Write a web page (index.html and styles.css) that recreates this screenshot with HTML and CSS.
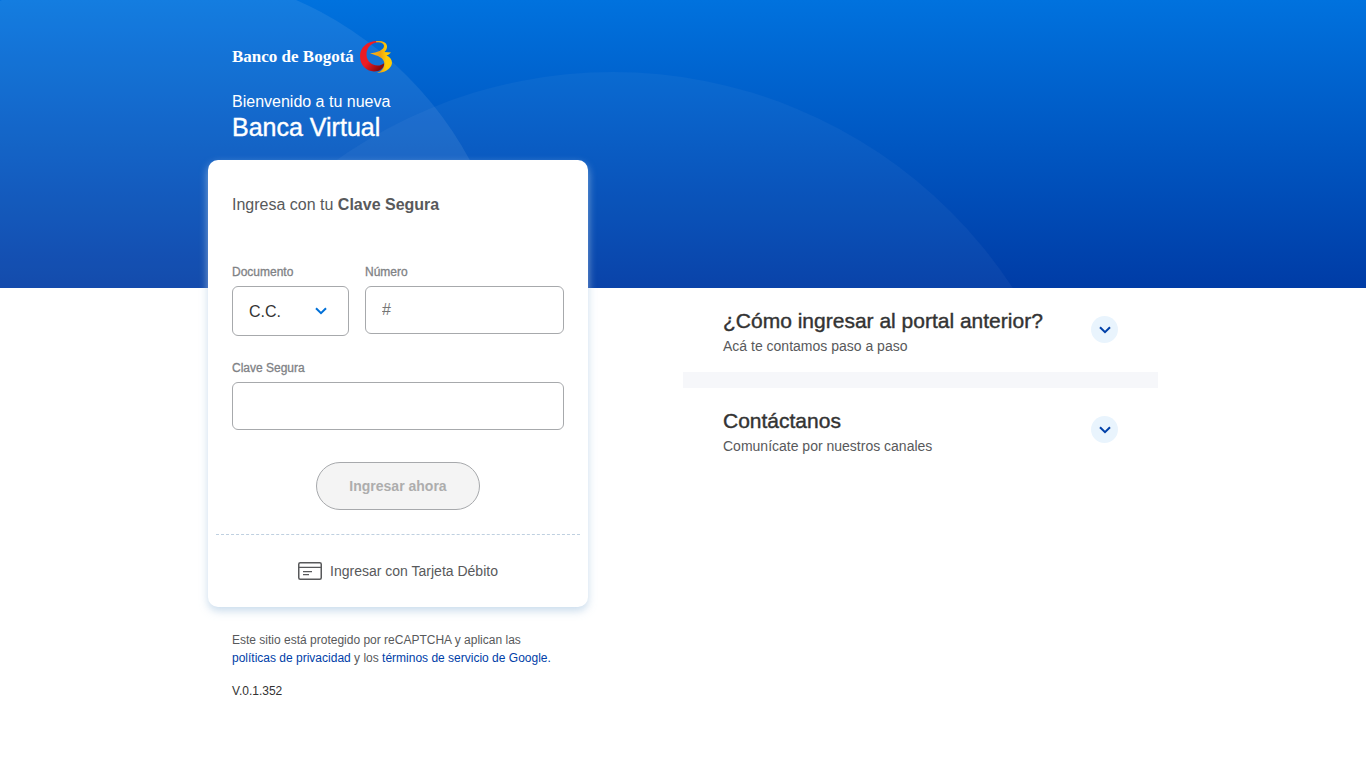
FILE: index.html
```
<!DOCTYPE html>
<html lang="es">
<head>
<meta charset="utf-8">
<meta name="viewport" content="width=device-width, initial-scale=1">
<title>Banco de Bogotá - Banca Virtual</title>
<link rel="stylesheet" href="styles.css">
</head>
<body>
<div class="hero" aria-hidden="true">
  <svg class="hero-shapes" width="1366" height="288" viewBox="0 0 1366 288">
    <circle cx="149" cy="334" r="365" fill="#fff" fill-opacity=".08"/>
    <circle cx="613" cy="550" r="478" fill="#fff" fill-opacity=".04"/>
  </svg>
</div>
<div class="container">
  <main class="login">
    <header class="intro">
      <div class="brand">
        <span class="brand-name">Banco de Bogotá</span>
        <svg class="brand-mark" width="34" height="34" viewBox="0 0 34 34" aria-hidden="true">
          <defs>
            <linearGradient id="red" x1="0" y1="0" x2="1" y2="1">
              <stop offset="0.5" stop-color="#ed1c24"/>
              <stop offset="0.85" stop-color="#8c0a0e"/>
            </linearGradient>
            <linearGradient id="gold" x1="0" y1="0" x2="1" y2="0">
              <stop offset="0" stop-color="#fdb813"/>
              <stop offset="0.45" stop-color="#eda012"/>
              <stop offset="0.75" stop-color="#ffcb05"/>
            </linearGradient>
          </defs>
          <path fill="url(#red)" d="M20 1C9 0 1 7 1 16C1 25 7 31 15 31.500C21 31.500 25 28.500 25.300 23C23 25.500 18 26.500 14 24.500C10 22.500 7.500 19 7.500 14.500C7.500 8 12 2.500 20 2Z"/>
          <path fill="url(#gold)" d="M17 1.300C22 .200 27.500 2 28 6C28.200 8.500 27 10.500 25.500 12L32 12.500C30.500 14 29 15 27.500 15.500C31 17 33 19.500 33 23C32.500 29 25 33 18 33C22.500 31.500 25.500 28 25.300 23C25 18 19 15.500 11 13.500C18 12.500 25 10 25 6C25 3.500 22 2 17 2.200Z"/>
        </svg>
      </div>
      <p class="welcome">Bienvenido a tu nueva</p>
      <h1 class="title">Banca Virtual</h1>
    </header>

    <form class="card">
      <h2 class="card-title">Ingresa con tu <b>Clave Segura</b></h2>
      <div class="row">
        <div class="field field-doc">
          <label for="doc">Documento</label>
          <div class="select-wrap">
            <select id="doc" class="select"><option>C.C.</option></select>
            <svg class="select-arrow" width="12" height="8" viewBox="0 0 12 8" aria-hidden="true"><path d="M1 1.2L6 6.2L11 1.2" fill="none" stroke="#0070d8" stroke-width="2"/></svg>
          </div>
        </div>
        <div class="field field-num">
          <label for="num">Número</label>
          <input id="num" class="input" type="text" placeholder="#">
        </div>
      </div>
      <div class="field field-key">
        <label for="key">Clave Segura</label>
        <input id="key" class="input" type="password">
      </div>
      <button class="submit" type="submit" disabled>Ingresar ahora</button>
      <div class="alt">
        <button class="alt-button" type="button">
          <svg width="24" height="18" viewBox="0 0 24 18" fill="none" stroke="#58595b" aria-hidden="true">
            <rect x=".75" y=".75" width="22.5" height="16.5" rx="1.5" stroke-width="1.5"/>
            <path d="M1 5.4H23M5 9.6H14M5 12.6H11" stroke-width="1.4"/>
          </svg>
          <span>Ingresar con Tarjeta Débito</span>
        </button>
      </div>
    </form>

    <footer class="legal">
      <p>Este sitio está protegido por reCAPTCHA y aplican las<br><a href="#">políticas de privacidad</a> y los <a href="#">términos de servicio de Google.</a></p>
      <p class="version">V.0.1.352</p>
    </footer>
  </main>

  <aside class="help">
    <section class="help-item">
      <div>
        <h2>¿Cómo ingresar al portal anterior?</h2>
        <p>Acá te contamos paso a paso</p>
      </div>
      <button class="toggle" type="button" aria-label="Mostrar cómo ingresar al portal anterior">
        <svg width="12" height="8" viewBox="0 0 12 8"><path d="M1 1.2L6 6.2L11 1.2" fill="none" stroke="#0040a8" stroke-width="2"/></svg>
      </button>
    </section>
    <section class="help-item">
      <div>
        <h2>Contáctanos</h2>
        <p>Comunícate por nuestros canales</p>
      </div>
      <button class="toggle" type="button" aria-label="Mostrar canales de contacto">
        <svg width="12" height="8" viewBox="0 0 12 8"><path d="M1 1.2L6 6.2L11 1.2" fill="none" stroke="#0040a8" stroke-width="2"/></svg>
      </button>
    </section>
  </aside>
</div>
</body>
</html>
```
FILE: styles.css
```
* { box-sizing: border-box; }
body {
  margin: 0;
  background: #fff;
  color: #58595b;
  font-family: "Liberation Sans", Arial, sans-serif;
}
h1, h2, p { margin: 0; font-weight: 400; }
svg { display: block; flex: none; }
button, input, select { font-family: inherit; }

.hero {
  position: absolute;
  top: 0;
  left: 0;
  right: 0;
  z-index: -1;
  height: 288px;
  overflow: hidden;
  background: linear-gradient(#0072de, #003ca6);
}
.container {
  display: grid;
  grid-template-columns: 1fr 1fr;
  max-width: 950px;
  margin: 0 auto;
}
.login { max-width: 380px; }

.intro { padding: 40px 24px 20px; color: #fff; }
.brand { display: flex; align-items: center; gap: 5px; height: 34px; }
.brand-name {
  font: 700 17px/32px "Liberation Serif", "Times New Roman", serif;
  white-space: nowrap;
}
.welcome { margin-top: 16px; font-size: 16px; line-height: 24px; }
.title { font-size: 25px; line-height: 26px; -webkit-text-stroke: 0.4px; }

.card {
  display: flex;
  flex-direction: column;
  padding: 32px 24px 0;
  border-radius: 10px;
  background: #fff;
  box-shadow: 0 4px 8px rgba(180, 205, 228, 0.7);
}
.card-title { font-size: 16px; line-height: 26px; }
.row { display: flex; align-items: flex-start; gap: 16px; margin-top: 46px; }
.field { display: flex; flex-direction: column; gap: 6px; }
.field-doc { flex: 0 0 117px; }
.field-num { flex: 1; min-width: 0; }
.field-key { margin-top: 24px; }
.field label { font-size: 12px; line-height: 16px; color: #808285; -webkit-text-stroke: 0.3px; }
.input, .select {
  width: 100%;
  height: 48px;
  padding: 0 16px;
  border: 1px solid #a7a9ac;
  border-radius: 6px;
  background: #fff;
  color: #333;
  font-size: 16px;
}
.input::placeholder { color: #757575; }
.select { display: block; height: 50px; appearance: none; }
.select-wrap { position: relative; }
.select-arrow { position: absolute; top: 21px; right: 22px; pointer-events: none; }

.submit {
  align-self: center;
  height: 48px;
  margin: 32px 0 24px;
  padding: 0 32px;
  border: 1px solid #a7a9ac;
  border-radius: 24px;
  background: #f4f4f4;
  color: #adadad;
  font-size: 14px;
  font-weight: 700;
}
.alt {
  display: flex;
  justify-content: center;
  margin: 0 -16px;
  padding: 24px 0;
  border-top: 1px dashed #bfd0e0;
}
.alt-button {
  display: flex;
  align-items: center;
  gap: 8px;
  height: 24px;
  padding: 0;
  border: 0;
  background: none;
  color: #58595b;
  font-size: 14px;
}

.legal { padding: 24px 24px 0; font-size: 12px; line-height: 18px; }
.legal a { color: #0040a8; text-decoration: none; }
.version { margin-top: 15px; color: #333; }

.help { padding-top: 288px; }
.help-item {
  display: flex;
  justify-content: space-between;
  align-items: flex-start;
  padding: 18px 40px 16px;
}
.help-item + .help-item { border-top: 16px solid #f6f7fa; }
.help-item h2 { font-size: 21px; line-height: 30px; color: #333; -webkit-text-stroke: 0.4px; }
.help-item p { font-size: 14px; line-height: 20px; }
.toggle {
  display: grid;
  place-items: center;
  flex: none;
  width: 27px;
  height: 27px;
  margin-top: 10px;
  padding: 0;
  border: 0;
  border-radius: 50%;
  background: #e9f4fd;
}
```
